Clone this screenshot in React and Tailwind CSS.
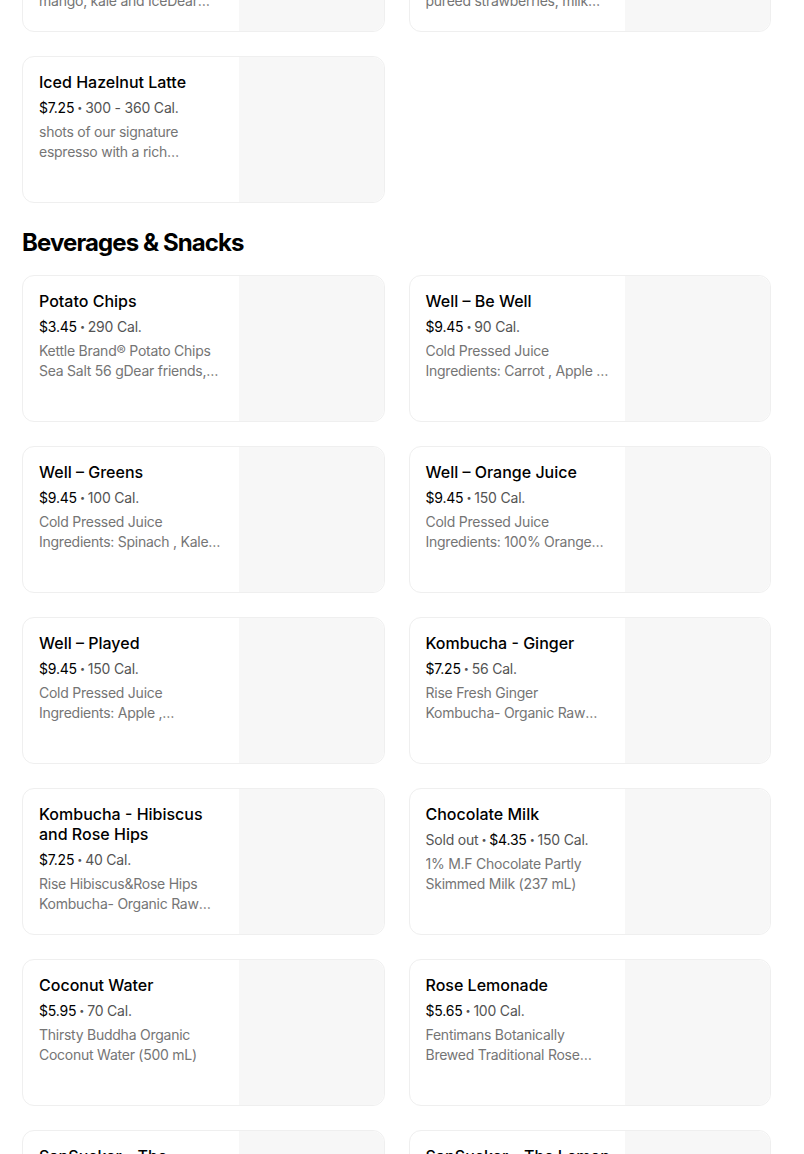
import React from 'react';

const topItems = [
  {
    name: 'Green Machine Smoothie Bowl Blend',
    price: '$8.95',
    cal: '280 Cal.',
    desc: 'Blended spinach, banana, mango, kale and IceDear friends, we are open',
  },
  {
    name: 'Strawberry Milk Shake Classic',
    price: '$7.95',
    cal: '410 Cal.',
    desc: 'Fresh vanilla ice cream, pureed strawberries, milk and whipped cream',
  },
  {
    name: 'Iced Hazelnut Latte',
    price: '$7.25',
    cal: '300 - 360 Cal.',
    desc: 'shots of our signature espresso with a rich hazelnut syrup and cold milk over ice',
  },
];

const snacks = [
  {
    name: 'Potato Chips',
    price: '$3.45',
    cal: '290 Cal.',
    desc: 'Kettle Brand® Potato Chips Sea Salt 56 gDear friends, thank you',
  },
  {
    name: 'Well – Be Well',
    price: '$9.45',
    cal: '90 Cal.',
    desc: 'Cold Pressed Juice Ingredients: Carrot , Apple , Lemon , Ginger',
  },
  {
    name: 'Well – Greens',
    price: '$9.45',
    cal: '100 Cal.',
    desc: 'Cold Pressed Juice Ingredients: Spinach , Kale , Cucumber , Celery',
  },
  {
    name: 'Well – Orange Juice',
    price: '$9.45',
    cal: '150 Cal.',
    desc: 'Cold Pressed Juice Ingredients: 100% Orange Juice',
  },
  {
    name: 'Well – Played',
    price: '$9.45',
    cal: '150 Cal.',
    desc: 'Cold Pressed Juice Ingredients: Apple , Pineapple , Mint',
  },
  {
    name: 'Kombucha - Ginger',
    price: '$7.25',
    cal: '56 Cal.',
    desc: 'Rise Fresh Ginger Kombucha- Organic Raw Kombucha (414 mL)',
  },
  {
    name: 'Kombucha - Hibiscus and Rose Hips',
    price: '$7.25',
    cal: '40 Cal.',
    desc: 'Rise Hibiscus&Rose Hips Kombucha- Organic Raw Kombucha (414 mL)',
  },
  {
    name: 'Chocolate Milk',
    soldOut: true,
    price: '$4.35',
    cal: '150 Cal.',
    desc: '1% M.F Chocolate Partly Skimmed Milk (237 mL)',
  },
  {
    name: 'Coconut Water',
    price: '$5.95',
    cal: '70 Cal.',
    desc: 'Thirsty Buddha Organic Coconut Water (500 mL)',
  },
  {
    name: 'Rose Lemonade',
    price: '$5.65',
    cal: '100 Cal.',
    desc: 'Fentimans Botanically Brewed Traditional Rose Lemonade (275 mL)',
  },
  {
    name: 'SapSucker - The Original Sparkling Tree Water',
    price: '$4.25',
    cal: '20 Cal.',
    desc: 'Organic sparkling maple tree water (355 mL)',
  },
  {
    name: 'SapSucker - The Lemon Lime',
    price: '$4.25',
    cal: '25 Cal.',
    desc: 'Organic sparkling maple tree water with lemon and lime',
  },
];

const Dot = () => <span className="text-[9px] align-[2px] mx-[3px]">•</span>;

const ItemCard = ({ item }) => (
  <div className="flex h-[147px] rounded-xl border border-[#efefef] bg-white overflow-hidden">
    <div className="flex-1 min-w-0 pl-4 pr-3 pt-[15px]">
      <div className="text-[16px] leading-5 font-medium text-black">{item.name}</div>
      <div className="mt-[6px] text-[14px] leading-5 text-[#545454] tracking-[-0.2px]">
        {item.soldOut && (
          <span>
            Sold out<Dot />
          </span>
        )}
        <span className="text-black">{item.price}</span>
        <Dot />
        <span>{item.cal}</span>
      </div>
      <div className="mt-1 pr-1 text-[14px] leading-5 text-[#757575] tracking-[-0.25px] line-clamp-2">
        {item.desc}
      </div>
    </div>
    <div className="w-[145px] shrink-0 bg-[#f7f7f7] rounded-r-xl" />
  </div>
);

const App = () => {
  return (
    <div className="bg-white min-h-screen overflow-hidden" style={{ fontFamily: 'Inter, "Noto Sans", sans-serif' }}>
      <div className="ml-[22px] w-[749px] -mt-[115px]">
        <div className="grid grid-cols-2 gap-x-6 gap-y-6">
          {topItems.map((item) => (
            <ItemCard key={item.name} item={item} />
          ))}
        </div>

        <h2 className="mt-6 mb-4 text-[24px] leading-8 font-bold text-black tracking-[-0.9px]">
          Beverages &amp; Snacks
        </h2>

        <div className="grid grid-cols-2 gap-x-6 gap-y-6">
          {snacks.map((item) => (
            <ItemCard key={item.name} item={item} />
          ))}
        </div>
      </div>
    </div>
  );
};

export default App;
